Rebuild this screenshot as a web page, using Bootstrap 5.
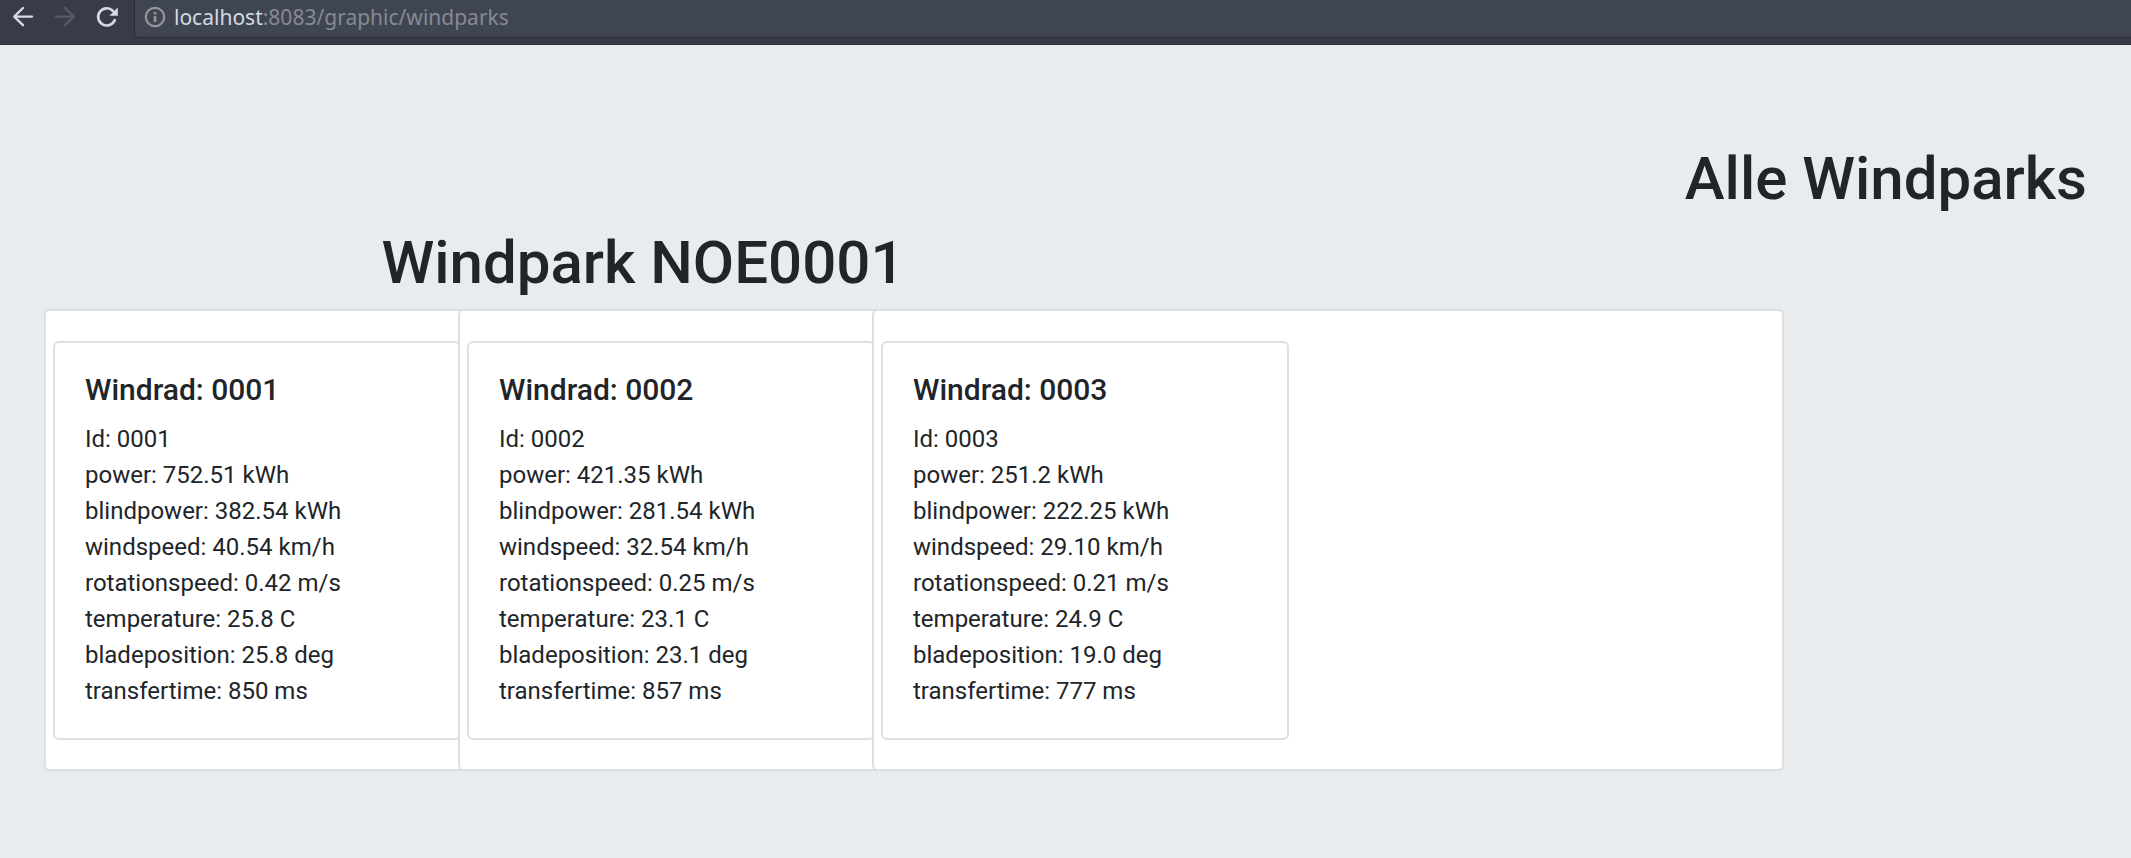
<!DOCTYPE html>
<html lang="de">
<head>
<meta charset="utf-8">
<meta name="viewport" content="width=device-width, initial-scale=1">
<title>Windparks</title>
<link href="https://cdn.jsdelivr.net/npm/bootstrap@5.3.0/dist/css/bootstrap.min.css" rel="stylesheet">
<style>
body { background: #e8ecef; color: #212529; font-family: Roboto, sans-serif; font-size: 24px; line-height: 36px; }
.toolbar { height: 45px; background: #383c4a; border-bottom: 1px solid #2b2e39; padding-left: 12px; gap: 16px; }
.tool-group { gap: 20px; padding-top: 6px; }
.tool-btn { color: #d3dae3; width: 22px; height: 22px; }
.tool-btn:disabled { color: #565a66; }
.tool-btn svg, .url-field svg { display: block; width: 22px; height: 22px; }
.url-field { height: 38px; background: #404552; border: 1px solid #2b2e39; border-width: 0 0 1px 1px; border-bottom-left-radius: 3px; color: #868a93; font: 21px/30px "Noto Sans", sans-serif; padding: 0 0 3px 9px; gap: 8px; }
.url-field b { color: #d3dae3; font-weight: 400; }
main { padding: 98px 44px 44px; }
h1 { font-size: 60px; line-height: 72px; font-weight: 500; margin: 0 0 12px; }
.park-title { max-width: 1198px; margin-bottom: 10px; }
.park { display: grid; grid-template-columns: 414px 414px minmax(414px, 1fr); max-width: 1740px; }
.park .card { border: 2px solid #dfdfdf; border-radius: 6px; background: #fff; }
.park > .card { grid-row: 1; padding: 30px 7px 29px; }
.park > .card:nth-child(1) { grid-column: 1 / -1; }
.park > .card:nth-child(2) { grid-column: 2 / -1; }
.park > .card:nth-child(3) { grid-column: 3 / -1; }
.turbine { width: 408px; }
.turbine .card-body { padding: 29px 30px; }
.turbine h5 { font-size: 30px; line-height: 36px; font-weight: 500; margin-bottom: 13px; }
</style>
</head>
<body>
<header class="toolbar d-flex">
  <div class="tool-group d-flex">
    <button class="tool-btn btn p-0 border-0" type="button" aria-label="Zurück"><svg viewBox="0 0 22 22" fill="none" stroke="currentColor" stroke-width="2.4" stroke-linecap="round" stroke-linejoin="round"><path d="M20 10.6H2.4M11 2L2.2 10.6l8.8 8.6"/></svg></button>
    <button class="tool-btn btn p-0 border-0 opacity-100" type="button" aria-label="Vor" disabled><svg viewBox="0 0 22 22" fill="none" stroke="currentColor" stroke-width="2.4" stroke-linecap="round" stroke-linejoin="round"><path d="M2 10.6h17.6M11 2l8.8 8.6-8.8 8.6"/></svg></button>
    <button class="tool-btn btn p-0 border-0" type="button" aria-label="Neu laden"><svg viewBox="0 0 22 22" fill="none" stroke="currentColor" stroke-width="2.6"><path d="M18.8 14A8.6 8.6 0 1 1 17 5" stroke-linecap="round"/><path d="M21.8 1.6v8.2h-8.4z" fill="currentColor" stroke="none"/></svg></button>
  </div>
  <div class="url-field d-flex flex-grow-1 align-items-center">
    <svg viewBox="0 0 22 22" fill="none" stroke="#96979b" stroke-width="2.2"><circle cx="11" cy="11" r="9.2"/><path d="M11 10v6M11 6v2.4" stroke-width="2.6"/></svg>
    <span><b>localhost</b>:8083/graphic/windparks</span>
  </div>
</header>
<main>
  <h1 class="text-end">Alle Windparks</h1>
  <h1 class="park-title text-center">Windpark NOE0001</h1>
  <section class="park">
    <div class="card">
      <article class="card turbine"><div class="card-body">
        <h5 class="card-title">Windrad: 0001</h5>
        <div>Id: 0001</div>
        <div>power: 752.51 kWh</div>
        <div>blindpower: 382.54 kWh</div>
        <div>windspeed: 40.54 km/h</div>
        <div>rotationspeed: 0.42 m/s</div>
        <div>temperature: 25.8 C</div>
        <div>bladeposition: 25.8 deg</div>
        <div>transfertime: 850 ms</div>
      </div></article>
    </div>
    <div class="card">
      <article class="card turbine"><div class="card-body">
        <h5 class="card-title">Windrad: 0002</h5>
        <div>Id: 0002</div>
        <div>power: 421.35 kWh</div>
        <div>blindpower: 281.54 kWh</div>
        <div>windspeed: 32.54 km/h</div>
        <div>rotationspeed: 0.25 m/s</div>
        <div>temperature: 23.1 C</div>
        <div>bladeposition: 23.1 deg</div>
        <div>transfertime: 857 ms</div>
      </div></article>
    </div>
    <div class="card">
      <article class="card turbine"><div class="card-body">
        <h5 class="card-title">Windrad: 0003</h5>
        <div>Id: 0003</div>
        <div>power: 251.2 kWh</div>
        <div>blindpower: 222.25 kWh</div>
        <div>windspeed: 29.10 km/h</div>
        <div>rotationspeed: 0.21 m/s</div>
        <div>temperature: 24.9 C</div>
        <div>bladeposition: 19.0 deg</div>
        <div>transfertime: 777 ms</div>
      </div></article>
    </div>
  </section>
</main>
<script src="https://cdn.jsdelivr.net/npm/bootstrap@5.3.0/dist/js/bootstrap.bundle.min.js"></script>
</body>
</html>
